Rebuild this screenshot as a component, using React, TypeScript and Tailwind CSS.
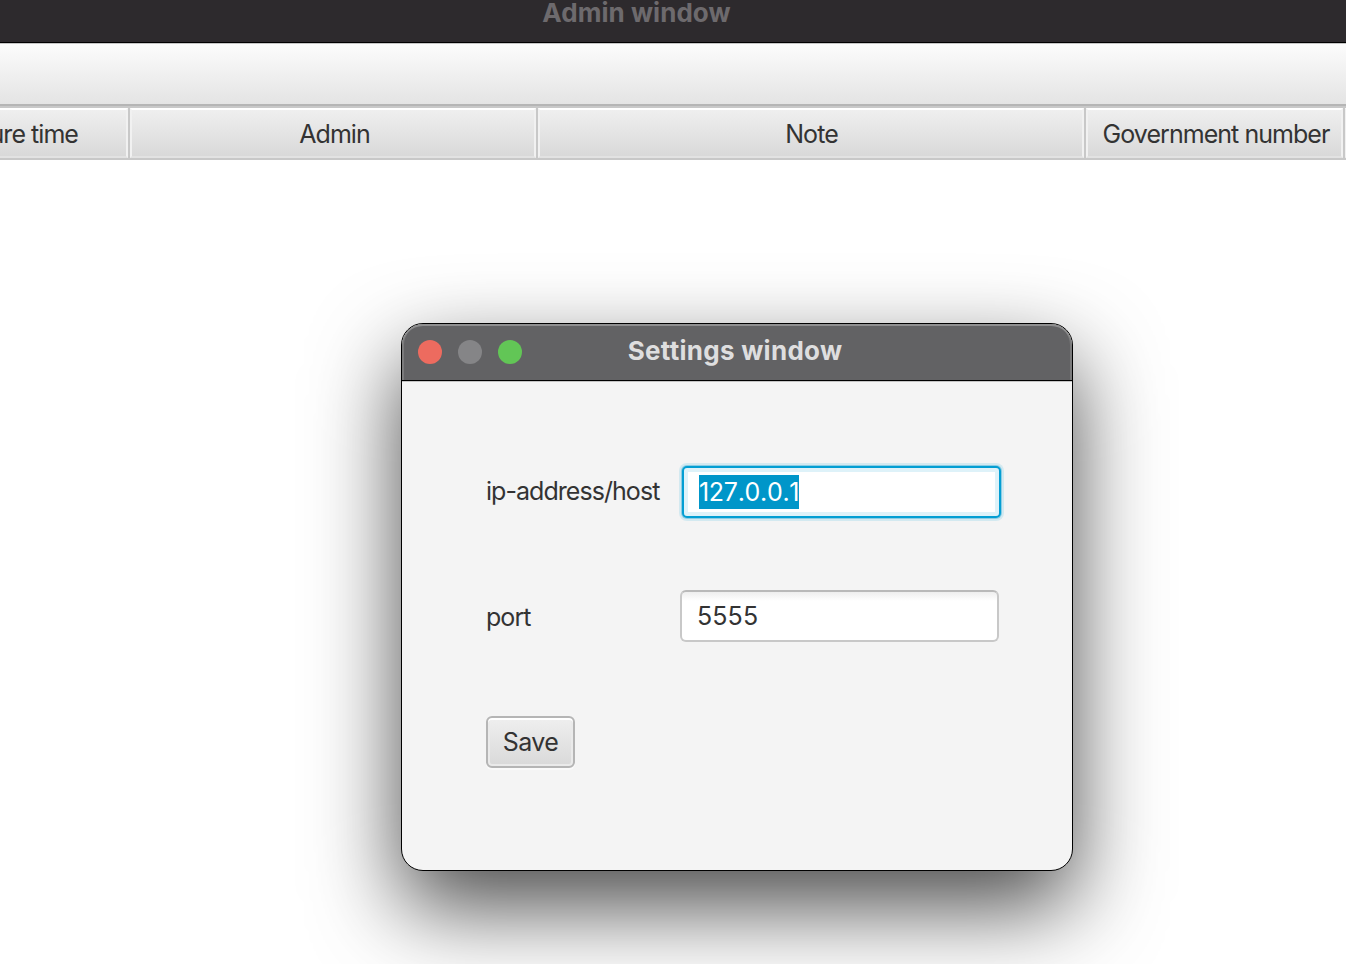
import type { ReactNode } from "react";

function HeaderCell({ className, children }: { className: string; children?: ReactNode }) {
  return (
    <div className={`h-[50px] shrink-0 overflow-hidden border-r-2 border-[#c8c8c8] ${className}`}>
      <div className="flex h-full items-center justify-center whitespace-nowrap border-2 border-x-[#f1f1f1] border-t-white border-b-[#e2e2e2] bg-gradient-to-b from-[#efefef] to-[#d9d9d9] pl-[3px] pt-0.5">
        {children}
      </div>
    </div>
  );
}

function SettingsDialog() {
  return (
    <section className="absolute left-[401px] top-[323px] flex h-[548px] w-[672px] flex-col overflow-hidden rounded-[22px] border border-black bg-[#f4f4f4] shadow-[0_36px_88px_rgba(0,0,0,0.71)]">
      <header className="relative flex h-[57px] shrink-0 items-center justify-center rounded-t-[21px] border-b border-black bg-[#626264] shadow-[inset_0_2px_0_#8f8f90,inset_2px_0_0_#7b7b7c,inset_-2px_0_0_#7b7b7c]">
        <div className="absolute left-4 top-4 flex gap-4">
          <span className="size-6 rounded-full bg-[#ed6b5f]" />
          <span className="size-6 rounded-full bg-[#858587]" />
          <span className="size-6 rounded-full bg-[#62c656]" />
        </div>
        <h2 className="-ml-1 -mt-0.5 text-[26px] font-bold leading-8 tracking-[0.28px] text-[#dededf]">Settings window</h2>
      </header>
      <form className="flex flex-1 flex-col items-start border-t border-[#c4c4c4] pl-[84px] pt-[84px]">
        <div className="flex h-[52px] items-center">
          <label className="w-[196px] pb-0.5 text-[25px] leading-8 tracking-[-0.95px]">ip-address/host</label>
          <div className="flex h-[52px] w-[319px] items-center rounded-[5px] border-2 border-[#039ed3] bg-white pl-[15px] shadow-[0_0_0_1px_#8bcde4,0_0_0_3px_#d3e9f0,inset_0_0_0_4px_#def2f9]">
            <span className="h-[34px] w-[100px] whitespace-nowrap bg-[#0096c9] text-[25px] leading-[34px] tracking-[-0.3px] text-white [font-kerning:none]">127.0.0.1</span>
          </div>
        </div>
        <div className="mt-[72px] flex h-[52px] items-center">
          <label className="w-[194px] pt-0.5 text-[25px] leading-8 tracking-[-0.95px]">port</label>
          <div className="flex h-[52px] w-[319px] items-center rounded-[6px] border-2 border-[#c8c8c8] border-t-[#b9b9b9] bg-white bg-gradient-to-b from-[#eeeeee] to-white to-[9px] pl-[15px] text-[25px] leading-8 tracking-[0.1px]">
            5555
          </div>
        </div>
        <button type="button" className="mt-[74px] flex h-[52px] w-[89px] items-center justify-center rounded-[6px] border-2 border-[#b5b5b5] bg-gradient-to-b from-[#efefef] to-[#d9d9d9] text-[25px] leading-8 tracking-[-0.6px] shadow-[0_2px_0_#fafafa,inset_0_2px_0_#ffffff,inset_0_0_0_2px_#eaeaea]">
          Save
        </button>
      </form>
    </section>
  );
}

export default function App() {
  return (
    <main className="relative h-[964px] w-[1346px] overflow-hidden bg-white font-['Inter',sans-serif] text-[#333333]">
      <header className="flex h-[43px] justify-center border-b border-black bg-[#2d2a2d]">
        <h1 className="-ml-[73px] -mt-[3px] text-[26px] font-bold leading-8 tracking-[0.05px] text-[#6d6a6d]">Admin window</h1>
      </header>
      <div className="h-[63px] border-b-2 border-t border-b-[#b5b5b5] border-t-[#c6c6c6] bg-gradient-to-b from-[#fcfcfc] to-[#e4e4e4]" />
      <div className="flex h-[54px] border-y-2 border-[#c8c8c8] text-[25px] leading-8 tracking-[-0.95px]">
        <HeaderCell className="flex w-[130px] justify-end [&>div]:w-[300px] [&>div]:shrink-0 [&>div]:justify-end [&>div]:pr-[48px]">Departure time</HeaderCell>
        <HeaderCell className="w-[408px]">Admin</HeaderCell>
        <HeaderCell className="w-[548px] [&>div]:pl-px">Note</HeaderCell>
        <HeaderCell className="w-[259px]">Government number</HeaderCell>
        <HeaderCell className="w-[100px]" />
      </div>
      <SettingsDialog />
    </main>
  );
}
